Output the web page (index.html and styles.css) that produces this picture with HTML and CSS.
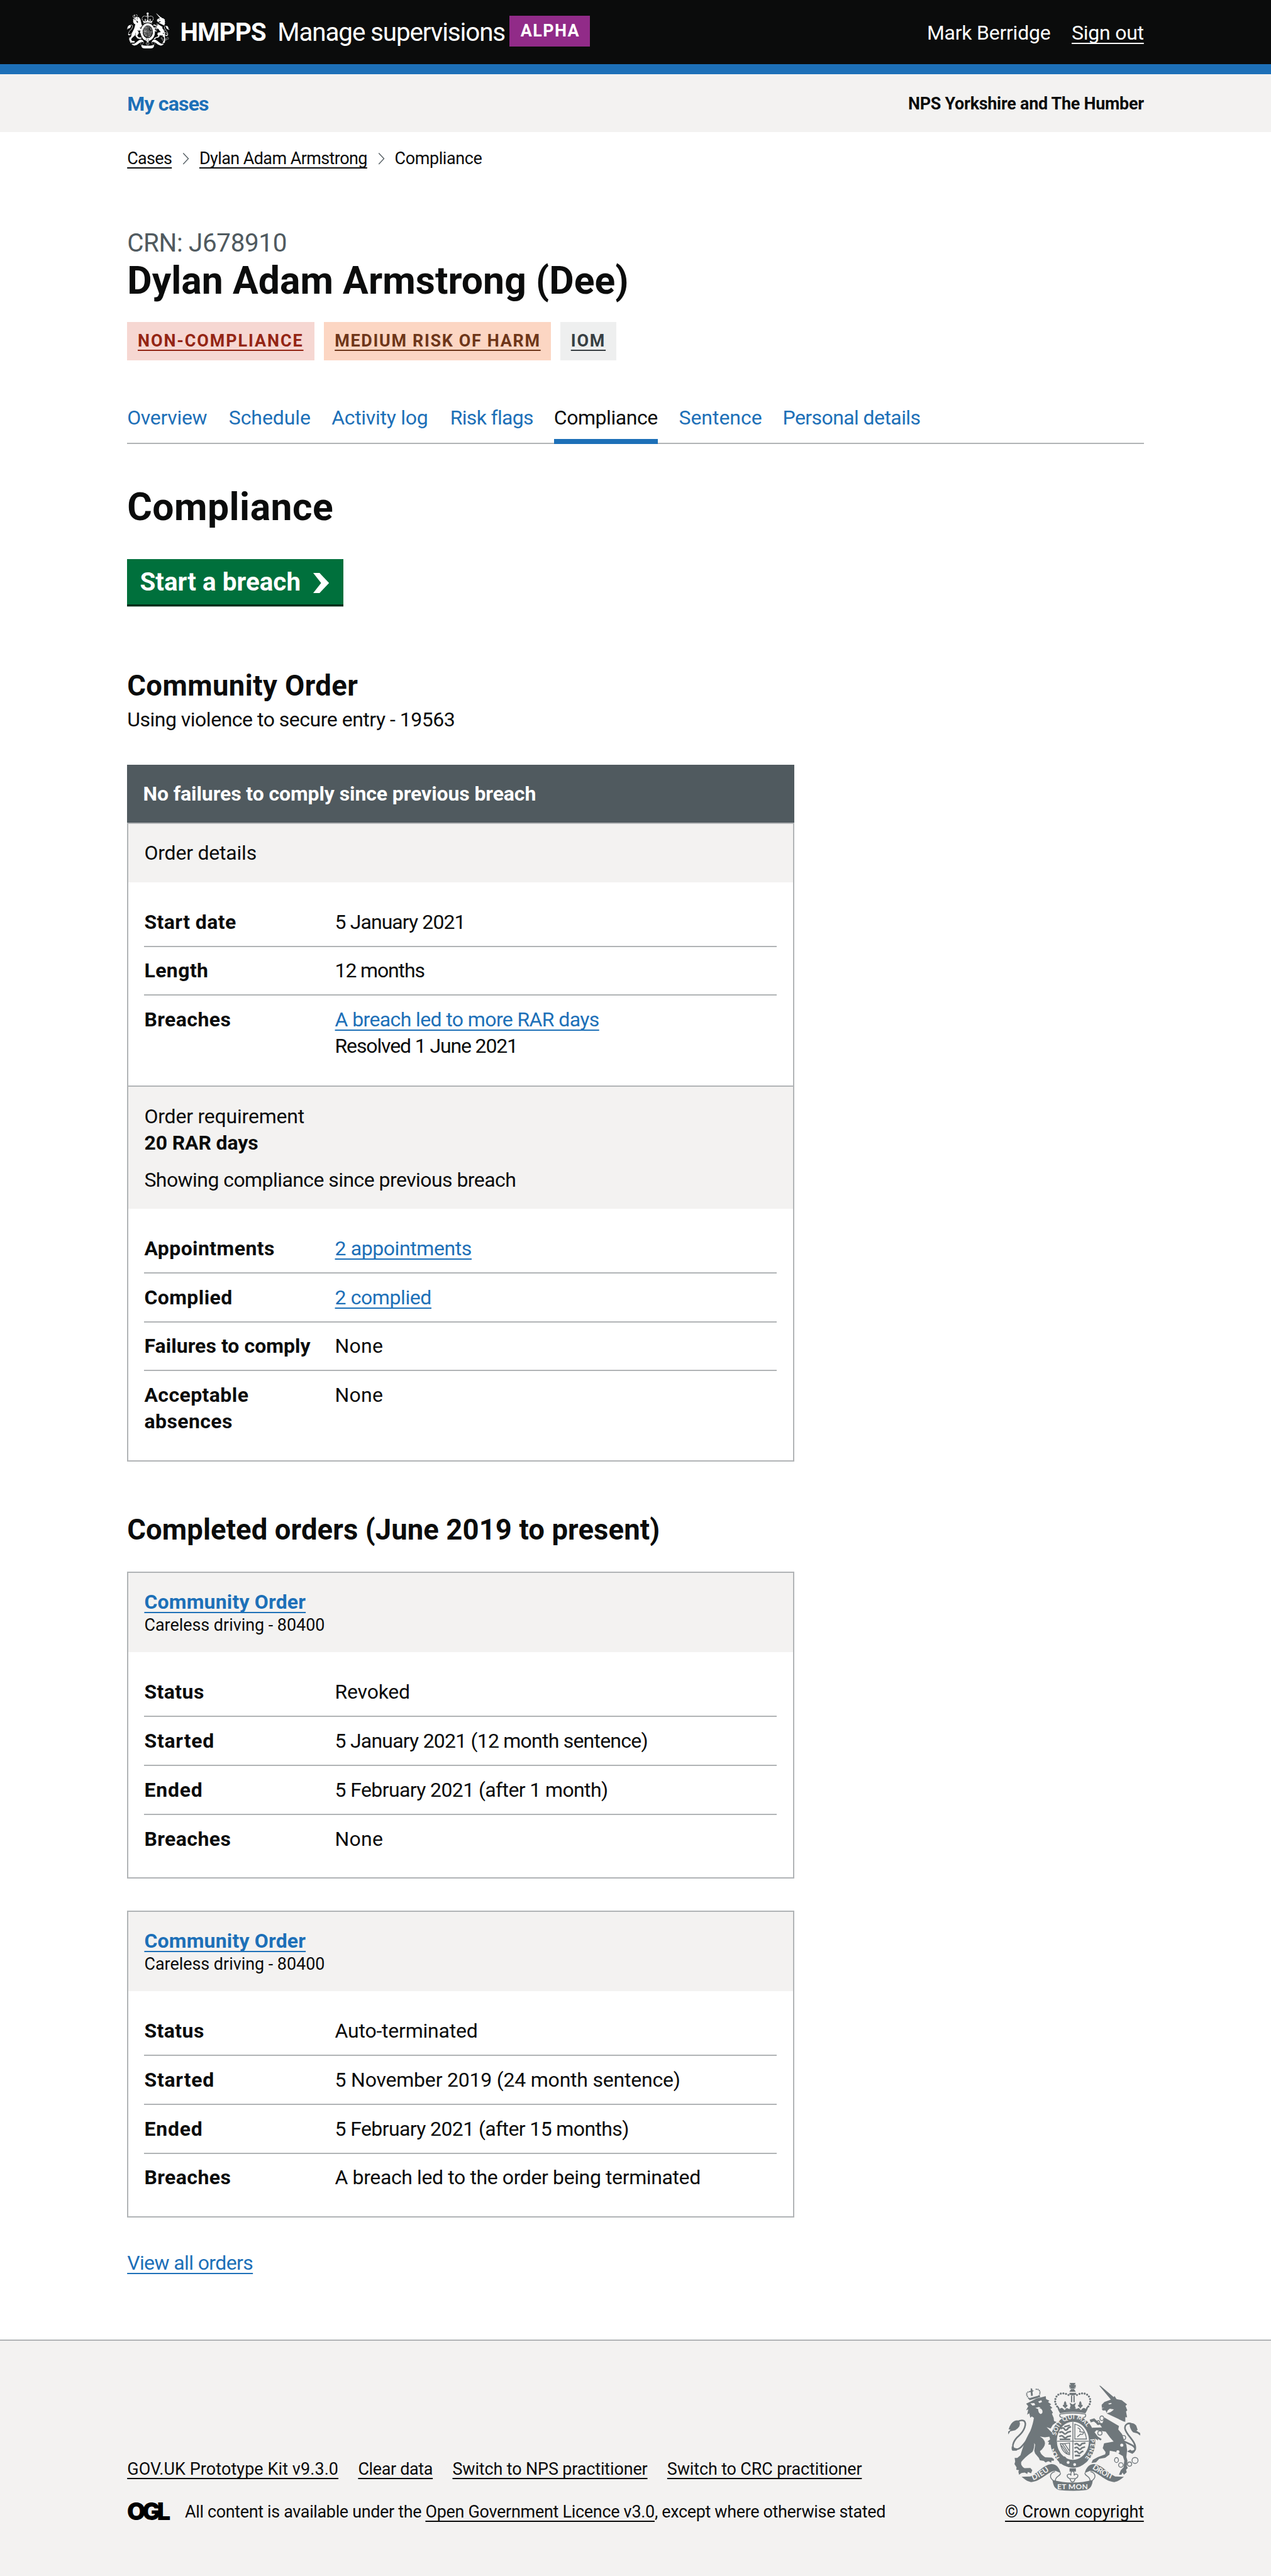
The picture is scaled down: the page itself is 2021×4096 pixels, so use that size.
FILE: index.html
```html
<!DOCTYPE html>
<html lang="en">
<head>
<meta charset="utf-8">
<title>Compliance - Manage supervisions</title>
<link rel="stylesheet" href="styles.css">
</head>
<body>
<svg class="defs" aria-hidden="true">
  <symbol id="crest" viewBox="192 120 750 612" preserveAspectRatio="none">
    <!-- centre crown -->
    <path d="M540 120h34l-8 14 9-6v20l-9-6 8 10h-34l8-10-9 6v-20l9 6zM549 154h16l10 16h-36zM539 176h38v10q-19 10-38 0z"/>
    <path d="M548 192h7v38h-7zM562 192h7v38h-7zM540 232l18 10 18-10-6 18 6 14h-36l6-14z"/>
    <g class="crest-beads">
      <path d="M534 188C505 172 472 178 462 205C454 225 460 240 470 254M582 188C611 172 644 178 654 205C662 225 656 240 646 254"/>
    </g>
    <path d="M515 222q11 14 5 22 10-4 8 8-8 4-12 14-6-10-14-14-2-12 8-8-6-10 5-22zM601 222q11 14 5 22 10-4 8 8-8 4-12 14-6-10-14-14-2-12 8-8-6-10 5-22z"/>
    <path d="M468 250q14 4 16 18 8-10 18-4l10 10 12-12 14 6 20-10 20 10 14-6 12 12 10-10q10-6 18 4 2-14 16-18-6 24-18 42-72-14-144 0-12-18-18-42z"/>
    <path class="crest-line" d="M486 297C480 312 492 318 506 316M630 297C636 312 624 318 610 316M486 297Q558 283 630 297"/>
    <!-- garter and shield -->
    <path fill-rule="evenodd" d="M559 303a127 148 0 1 0 .1 0zM559 340a91 108 0 1 1-.1 0z"/>
    <path class="crest-line" d="M559 342v210M469 450h180"/>
    <path class="crest-fine" d="M490 380q14-12 22 2t22-8l14-6M482 402q14-10 24 2t22-4l20-6M482 424q14-10 24 2t22-2l20-4M484 440h60M510 368l32-8M568 468q14-10 22 2t20-6l20-4M568 490q14-10 22 2t20-4l18-6M568 512q12-10 20 2t20-4l10-4M570 532h30"/>
    <path class="crest-line" d="M570 354q55 12 66 84h-66zM586 374q20 8 12 22l22 4q-4 16-18 10l-18 16M488 464q24 2 52-4v66q-40-6-52-62zM500 466l36 54M512 464l26 40M494 474l34 48"/>
    <path d="M486 538q60 34 146 32-30 32-72 30-60-4-86-40zM540 604h36v18h-36z"/>
    <circle class="crest-gap" cx="532" cy="571" r="8"/><circle class="crest-gap" cx="569" cy="582" r="8"/>
    <path class="crest-line" d="M488 578q-14-18 6-30 20-20 28 4M557 616q14 14 8 28 10-14 22-2 2 14-14 20l-8 16-8 4-8-4-8-16q-16-6-14-20 12-12 22 2-6-14 8-28zM540 662h34"/>
    <!-- lion -->
    <path d="M294 238 318 226 352 208 385 200 405 195 407 212 426 221 418 228 436 241 428 247 443 262 432 267 446 288 440 295 450 318 452 336 467 342 445 358 433 378 410 370 450 412 468 455 466 478 448 472 440 479 432 470 420 469 424 455 415 452 430 440 426 425 400 428 372 424Q400 440 401 462 400 485 372 507 380 530 402 541L440 543 452 552 450 562 438 560 436 572 420 564 404 571 394 562 372 558 366 545 345 520 340 505 345 470 340 460Q342 488 330 510 285 542 266 568 262 590 285 603L318 602 329 614 322 632 304 624 300 636 286 628 268 630 254 640 250 622 254 614 238 612 240 598 228 580 232 565 229 545 244 545 262 530Q270 500 282 468 292 438 318 392 334 350 338 318L326 310 318 318 312 292 300 300 306 270 294 275 306 252Z"/>
    <path class="crest-gap" d="M318 236 340 234 346 246 330 248ZM362 226 380 218 384 228 370 234ZM362 268q16-10 24 8 4 18-10 20-14-6-14-28zM346 262l20-6 10 4-14 8z"/>
    <path class="crest-limb" d="M300 442C272 480 252 504 228 494C206 480 228 440 252 420C284 392 300 350 282 335C268 327 254 334 244 340"/>
    <path d="M256 336Q268 368 232 388L204 394 193 412 192 396 206 386 195 382Q208 344 228 336 244 328 256 336ZM212 480l14 8 24 4-10 12-24 0-4-8zM434 478h34l-8 12-22-2z"/>
    <path d="M306 208 370 190 374 200 314 218ZM320 150l8 2 2 10 8 2-8 6 2 22-10 2-2-22-8-2 8-6z"/>
    <g class="crest-beads crest-beads-small"><path d="M308 206C290 186 294 168 318 170M368 192C380 166 366 150 342 158"/></g>
    <!-- unicorn -->
    <path d="M708 135 716 137 790 200 795 194 806 212 836 218 866 242 857 250 867 275 860 282 866 314 856 314 856 340 846 338 750 293 772 286Q800 268 806 240 804 262 790 270L768 266 756 276 750 290 744 276 728 276 722 266 736 260 723 262 722 244 738 228 774 214Z"/>
    <path class="crest-gap" d="M758 238l16-5 6 5-14 4z"/>
    <path class="crest-collar" d="M750 302 840 350"/>
    <path d="M738 316 820 364 816 384 838 410 848 442 862 470 866 500 862 540 868 560 864 590 870 602 860 612 864 626 848 640 840 628 834 640 820 640 830 615 846 598 850 560 842 534 800 510 768 504 766 526 742 544 708 550 690 570 664 573 672 556 700 540 742 524 744 512 728 490 736 462 790 452 770 430 745 396 692 388 682 400 700 424 722 438 716 446 700 436 702 446 684 434 664 398 668 374 724 372 712 356 692 350 678 338 660 344 654 328 680 320 706 345 726 348Z"/>
    <path class="crest-limb" d="M850 452C890 470 912 478 912 496C908 506 896 510 884 508M912 496C920 450 862 420 854 378C852 356 872 342 894 354"/>
    <path d="M880 352Q900 340 918 362L926 386 918 390 940 404 941 418 924 406 900 400Q880 380 880 352ZM866 508l18-10 10 8 22-10-8 16-12 10z"/>
    <g class="crest-chain">
      <ellipse cx="723" cy="320" rx="11" ry="13"/><ellipse cx="703" cy="345" rx="8" ry="11"/><ellipse cx="712" cy="404" rx="12" ry="12"/>
      <circle cx="846" cy="430" r="12"/><ellipse cx="806" cy="557" rx="11" ry="14"/><circle cx="831" cy="585" r="13"/>
      <circle cx="880" cy="580" r="12"/><circle cx="911" cy="559" r="17"/>
    </g>
    <circle class="crest-gap" cx="836" cy="473" r="9"/><circle class="crest-gap" cx="814" cy="510" r="9"/>
    <!-- ribbon -->
    <path d="M268 652 318 650C365 628 390 586 436 580 466 580 482 602 490 630L460 618C420 618 380 678 322 682 298 678 284 664 268 652ZM848 652 798 650C751 628 726 586 680 580 650 580 634 602 626 630L656 618C696 618 736 678 794 682 818 678 832 664 848 652Z"/>
    <path d="M443 670Q558 700 672 670C668 700 662 718 635 727 590 733 530 733 480 727 453 718 448 700 443 670Z"/>
    <path class="crest-line" d="M458 622C428 630 424 655 446 672M488 630C494 648 456 646 460 676M658 622C688 630 692 655 670 672M628 630C622 648 660 646 656 676"/>
  </symbol>
</svg>

<header class="header">
  <div class="container header-row">
    <div class="brand">
      <svg class="brand-crest"><use href="#crest"/></svg>
      <span class="brand-org">HMPPS</span>
      <span class="brand-product">Manage supervisions</span>
      <strong class="phase">ALPHA</strong>
    </div>
    <div class="account"><span class="account-name">Mark Berridge</span><a class="link account-link">Sign out</a></div>
  </div>
</header>
<nav class="subnav">
  <div class="container subnav-row">
    <a class="subnav-link">My cases</a>
    <span class="subnav-team">NPS Yorkshire and The Humber</span>
  </div>
</nav>

<main class="container">
  <div class="breadcrumbs">
    <a class="link t-snug">Cases</a>
    <svg class="crumb-arrow" viewBox="0 0 6 11"><path d="M.5.3 5.4 5.5.5 10.7"/></svg>
    <a class="link crumb-name">Dylan Adam Armstrong</a>
    <svg class="crumb-arrow" viewBox="0 0 6 11"><path d="M.5.3 5.4 5.5.5 10.7"/></svg>
    <span class="crumb">Compliance</span>
  </div>

  <p class="crn">CRN: J678910</p>
  <h1 class="name">Dylan Adam Armstrong (Dee)</h1>
  <div class="tags">
    <a class="tag tag-red">NON-COMPLIANCE</a>
    <a class="tag tag-orange">MEDIUM RISK OF HARM</a>
    <a class="tag tag-grey">IOM</a>
  </div>

  <nav class="tabs">
    <a class="tab tab-overview">Overview</a>
    <a class="tab tab-schedule">Schedule</a>
    <a class="tab tab-activity">Activity log</a>
    <a class="tab tab-risk">Risk flags</a>
    <a class="tab tab-compliance tab-current">Compliance</a>
    <a class="tab tab-sentence">Sentence</a>
    <a class="tab tab-personal">Personal details</a>
  </nav>

  <h2 class="title">Compliance</h2>
  <a class="start-button">Start a breach
    <svg class="start-icon" viewBox="0 0 15 19"><path d="M0 0h6l9 9.500-9 9.500H0l7.500-9.500z"/></svg>
  </a>

  <h3 class="heading order-heading">Community Order</h3>
  <p class="offence">Using violence to secure entry - 19563</p>

  <section class="card card-banner">
    <div class="banner">No failures to comply since previous breach</div>
    <div class="card-head"><p class="t-near">Order details</p></div>
    <dl class="list">
      <div class="row"><dt>Start date</dt><dd class="t-tight">5 January 2021</dd></div>
      <div class="row"><dt>Length</dt><dd class="t-tightest">12 months</dd></div>
      <div class="row"><dt>Breaches</dt><dd><a class="link link-blue">A breach led to more RAR days</a><br><span class="t-tightest">Resolved 1 June 2021</span></dd></div>
    </dl>
    <div class="card-head card-head-ruled">
      <p class="t-near">Order requirement</p>
      <p class="strong">20 RAR days</p>
      <p class="card-note">Showing compliance since previous breach</p>
    </div>
    <dl class="list">
      <div class="row"><dt>Appointments</dt><dd><a class="link link-blue t-base">2 appointments</a></dd></div>
      <div class="row"><dt>Complied</dt><dd><a class="link link-blue t-base">2 complied</a></dd></div>
      <div class="row"><dt class="t-zero">Failures to comply</dt><dd class="t-open">None</dd></div>
      <div class="row"><dt>Acceptable absences</dt><dd class="t-open">None</dd></div>
    </dl>
  </section>

  <h3 class="heading completed-heading">Completed orders (June 2019 to present)</h3>

  <section class="card">
    <div class="card-head"><p><a class="link link-blue strong">Community Order</a></p><p class="small">Careless driving - 80400</p></div>
    <dl class="list">
      <div class="row"><dt>Status</dt><dd class="t-near">Revoked</dd></div>
      <div class="row"><dt class="t-wide">Started</dt><dd class="t-snug">5 January 2021 (12 month sentence)</dd></div>
      <div class="row"><dt class="t-wide">Ended</dt><dd class="t-close">5 February 2021 (after 1 month)</dd></div>
      <div class="row"><dt>Breaches</dt><dd class="t-open">None</dd></div>
    </dl>
  </section>

  <section class="card">
    <div class="card-head"><p><a class="link link-blue strong">Community Order</a></p><p class="small">Careless driving - 80400</p></div>
    <dl class="list">
      <div class="row"><dt>Status</dt><dd class="t-near">Auto-terminated</dd></div>
      <div class="row"><dt class="t-wide">Started</dt><dd class="t-near">5 November 2019 (24 month sentence)</dd></div>
      <div class="row"><dt class="t-wide">Ended</dt><dd class="t-close">5 February 2021 (after 15 months)</dd></div>
      <div class="row"><dt>Breaches</dt><dd>A breach led to the order being terminated</dd></div>
    </dl>
  </section>

  <p class="view-all"><a class="link link-blue">View all orders</a></p>
</main>

<footer class="footer">
  <div class="container footer-row">
    <div class="footer-main">
      <div class="footer-links">
        <a class="link footer-kit">GOV.UK Prototype Kit v9.3.0</a>
        <a class="link t-base">Clear data</a>
        <a class="link">Switch to NPS practitioner</a>
        <a class="link">Switch to CRC practitioner</a>
      </div>
      <div class="licence">
        <svg class="ogl" viewBox="0 0 82 34"><text x="0" y="33" textLength="82" lengthAdjust="spacing">OGL</text></svg>
        <p class="t-base">All content is available under the <a class="link">Open Government Licence v3.0</a>, except where otherwise stated</p>
      </div>
    </div>
    <div class="copyright">
      <svg class="footer-crest" viewBox="192 120 750 612">
        <use href="#crest" x="192" y="120" width="750" height="612"/>
        <defs>
          <path id="left-ribbon" d="M334 672Q385 652 440 604"/>
          <path id="right-ribbon" d="M668 604Q725 645 796 673"/>
          <path id="garter-top" d="M464 418A98 117 0 0 1 652 400"/>
          <path id="garter-right" d="M657 438A104 122 0 0 1 612 560"/>
        </defs>
        <g class="motto">
          <text><textPath href="#left-ribbon" textLength="108">DIEU</textPath></text>
          <text x="470" y="723" textLength="174">ET MON</text>
          <text><textPath href="#right-ribbon" textLength="128">DROIT</textPath></text>
          <text class="motto-garter"><textPath href="#garter-top" textLength="240">SOIT QUI MAL</textPath></text>
          <text class="motto-garter"><textPath href="#garter-right" textLength="116">PENSE</textPath></text>
          <text class="motto-garter" transform="translate(484 545) rotate(-122)" textLength="66">HON</text>
        </g>
      </svg>
      <a class="link">© Crown copyright</a>
    </div>
  </div>
</footer>
</body>
</html>
```
FILE: styles.css
```css
/* 1rem is ten design pixels */
html { font-size: 16.84px; }
* { box-sizing: border-box; }
body, p, h1, h2, h3, dl, dd { margin: 0; }
body {
  display: flex;
  flex-direction: column;
  min-height: 4096px;
  background: #fff;
  color: #0b0c0c;
  font-family: Roboto, "Liberation Sans", sans-serif;
  font-size: 1.9rem;
  line-height: 2.5rem;
  letter-spacing: -.012em;
}
.defs { display: none; }
.container { width: 96rem; margin: 0 auto; }
.strong { font-weight: 700; letter-spacing: -.004em; }
dt { font-weight: 700; letter-spacing: .013em; }
.link {
  text-decoration: underline;
  text-decoration-thickness: 2px;
  text-underline-offset: .3rem;
  text-decoration-skip-ink: none;
}
.link-blue { color: #1d70b8; letter-spacing: -.019em; }
.link-blue.strong { letter-spacing: .0056em; }

/* tracking */
.t-tightest { letter-spacing: -.0355em; }
.t-tight { letter-spacing: -.0283em; }
.t-snug { letter-spacing: -.0242em; }
.t-close { letter-spacing: -.019em; }
.t-base { letter-spacing: -.0125em; }
.t-near { letter-spacing: -.0065em; }
.t-zero { letter-spacing: .0015em; }
.t-open { letter-spacing: .007em; }
.t-wide { letter-spacing: .024em; }

/* header */
.header { height: 7rem; background: #0b0c0c; border-bottom: 1rem solid #1d70b8; color: #fff; }
.header-row { display: flex; justify-content: space-between; height: 6rem; }
.brand { display: flex; font-size: 2.4rem; line-height: 3rem; padding-top: 1.6rem; }
.brand-crest { width: 4rem; height: 3.4rem; margin: -.4rem 1rem 0 0; fill: #fff; color: #0b0c0c; }
.brand-org { font-weight: 700; letter-spacing: -.022em; width: 9.2rem; }
.brand-product { letter-spacing: -.028em; width: 21.9rem; }
.phase {
  width: 7.6rem; height: 2.9rem; margin-top: -.1rem; padding-left: .1rem;
  background: #912b88; font-size: 1.6rem; line-height: 2.9rem; text-align: center; letter-spacing: .051em;
}
.account { display: flex; gap: 2rem; line-height: 2.5rem; padding-top: 1.85rem; letter-spacing: -.0075em; }

.subnav { height: 5.5rem; background: #f3f2f1; font-weight: 700; }
.subnav-row { display: flex; justify-content: space-between; padding-top: 1.55rem; }
.subnav-link { color: #1d70b8; letter-spacing: -.025em; }
.subnav-team { font-size: 1.6rem; letter-spacing: -.0103em; }

/* case heading */
.breadcrumbs { display: flex; padding-top: 1.5rem; height: 9rem; font-size: 1.6rem; line-height: 2rem; }
.crumb-arrow { width: .65rem; height: 1.1rem; margin: .45rem .95rem 0 1rem; fill: none; stroke: #505a5f; stroke-width: .8; }
.crumb-name { letter-spacing: -.021em; }
.crn { color: #505a5f; font-size: 2.4rem; line-height: 3rem; }
.name { font-size: 3.6rem; line-height: 4rem; letter-spacing: .001em; }
.tags { display: flex; gap: .9rem; margin-top: 1.9rem; }
.tag {
  height: 3.6rem; padding: 0 1rem; font-size: 1.6rem; line-height: 3.6rem; font-weight: 700; white-space: nowrap;
  text-decoration: underline; text-decoration-thickness: 2px; text-underline-offset: .3rem;
}
.tag-red { background: #f6d7d2; color: #942514; width: 17.7rem; letter-spacing: .0705em; }
.tag-orange { background: #fcd6c3; color: #6e3619; width: 21.4rem; letter-spacing: .0616em; }
.tag-grey { background: #eeefef; color: #383f43; width: 5.3rem; letter-spacing: .066em; }

.tabs { display: flex; gap: 2rem; height: 3.7rem; margin-top: 4.2rem; color: #1d70b8; box-shadow: inset 0 -2px #b1b4b6; }
.tab { white-space: nowrap; }
.tab-overview { width: 7.6rem; letter-spacing: -.01em; }
.tab-schedule { width: 7.7rem; letter-spacing: -.003em; }
.tab-activity { width: 9.2rem; letter-spacing: -.009em; }
.tab-risk { width: 7.8rem; letter-spacing: -.0215em; }
.tab-compliance { width: 9.8rem; letter-spacing: -.0135em; }
.tab-sentence { width: 7.8rem; letter-spacing: -.001em; }
.tab-personal { letter-spacing: -.018em; }
.tab-current { color: #0b0c0c; border-bottom: .5rem solid #1d70b8; }
.title { margin-top: 4rem; font-size: 3.6rem; line-height: 4rem; letter-spacing: .008em; }
.start-button {
  display: flex; align-items: center; width: 20.4rem; height: 4.3rem; margin-top: 2.9rem; padding: .15rem 0 0 1.2rem;
  background: #00703c; box-shadow: 0 .2rem #002d18; color: #fff; font-size: 2.4rem; font-weight: 700; letter-spacing: 0;
}
.start-icon { width: 1.5rem; height: 1.9rem; margin-left: 1.2rem; fill: #fff; }

.heading { font-size: 2.7rem; line-height: 3rem; letter-spacing: .002em; }
.order-heading { margin-top: 6.2rem; letter-spacing: .009em; }
.offence { margin: .4rem 0 3rem; letter-spacing: -.0153em; }

/* order cards */
.card { width: 63rem; height: 29rem; margin-bottom: 3rem; border: 2px solid #b1b4b6; }
.card-banner { height: 65.8rem; margin-bottom: 5rem; }
.banner {
  height: 5.6rem; margin: -2px -2px 0; padding: 1.5rem; border-bottom: 2px solid #b1b4b6;
  background: #505a5f; color: #fff; font-weight: 700; letter-spacing: -.003em;
}
.card-head { padding: 1.5rem; background: #f3f2f1; }
.card-head-ruled { height: 11.6rem; border-top: 2px solid #b1b4b6; }
.card-note { margin-top: 1rem; letter-spacing: -.0174em; }
.small { font-size: 1.6rem; line-height: 2rem; letter-spacing: -.001em; }
.completed-heading { margin-bottom: 2.4rem; }
.list { padding: 1.5rem 1.55rem 1.5rem 1.5rem; }
.row { display: grid; grid-template-columns: 15.9rem 1fr; column-gap: 2.1rem; min-height: 4.6rem; padding: 1rem 0; border-bottom: 2px solid #b1b4b6; }
.row:last-child { min-height: 4.5rem; border-bottom: 0; }
.view-all { height: 2.5rem; }

/* footer */
.footer { flex: 1; margin-top: 6rem; border-top: 2px solid #b1b4b6; background: #f3f2f1; font-size: 1.6rem; line-height: 2rem; letter-spacing: -.005em; }
.footer-row { display: flex; justify-content: space-between; padding-top: 4rem; }
.footer-main { padding-top: 7.2rem; }
.footer-links { display: flex; gap: 1.86rem; }
.footer-kit { letter-spacing: .0035em; }
.licence { display: flex; margin-top: 2rem; }
.licence .link { letter-spacing: -.0103em; }
.ogl { width: 4.1rem; height: 1.7rem; margin: .05rem 1.35rem 0 0; overflow: visible; font: 900 45px Inter, sans-serif; }
.copyright { display: flex; flex-direction: column; align-items: flex-end; white-space: nowrap; }
.footer-crest { width: 12.5rem; height: 10.2rem; margin: 0 .3rem 1rem 0; fill: #6f777b; color: #f3f2f1; }

/* royal arms */
.brand-crest { --ink: #fff; }
.footer-crest { --ink: #6f777b; }
.crest-gap { fill: currentColor; }
.crest-line, .crest-fine, .crest-limb, .crest-chain, .crest-beads, .crest-collar { fill: none; stroke: var(--ink); stroke-width: 5; }
.crest-fine { stroke-width: 9; }
.crest-limb { stroke-width: 9; }
.crest-beads { stroke-width: 12; stroke-linecap: round; stroke-dasharray: 0 15; }
.crest-beads-small { stroke-width: 8; stroke-dasharray: 0 10; }
.crest-collar { stroke: currentColor; stroke-width: 8; }
.motto { fill: currentColor; font: 700 43px Lato, sans-serif; letter-spacing: 0; }
.motto-garter { font-size: 34px; }
```
